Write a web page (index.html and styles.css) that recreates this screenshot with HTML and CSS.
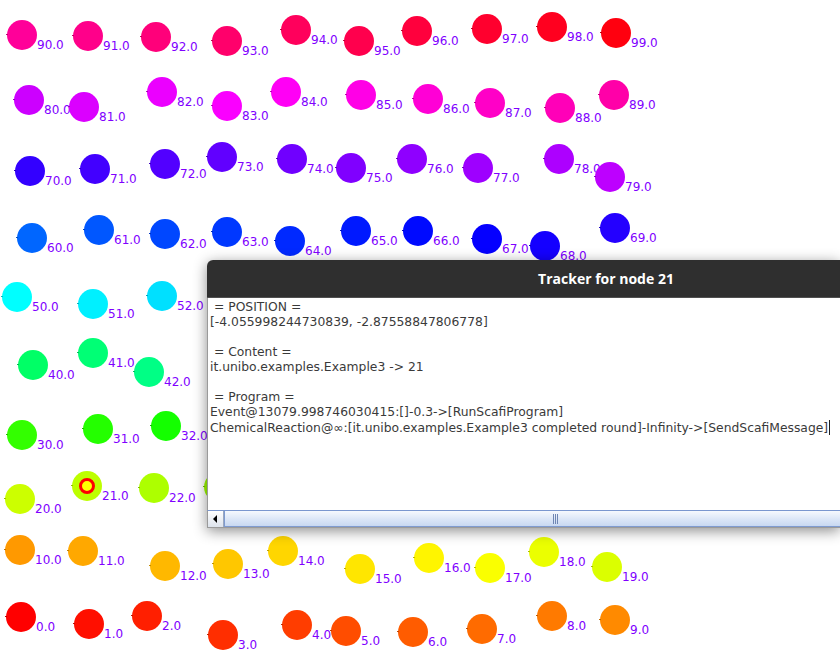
FILE: index.html
```html
<!DOCTYPE html>
<html>
<head>
<meta charset="utf-8">
<link rel="stylesheet" href="styles.css">
</head>
<body>
<div class="canvas">
  <div class="node" style="left:22px;top:35px;--v:90"><i class="dot"></i><span class="lbl">90.0</span></div>
  <div class="node" style="left:88px;top:36px;--v:91"><i class="dot"></i><span class="lbl">91.0</span></div>
  <div class="node" style="left:156px;top:37px;--v:92"><i class="dot"></i><span class="lbl">92.0</span></div>
  <div class="node" style="left:227px;top:41px;--v:93"><i class="dot"></i><span class="lbl">93.0</span></div>
  <div class="node" style="left:296px;top:30px;--v:94"><i class="dot"></i><span class="lbl">94.0</span></div>
  <div class="node" style="left:359px;top:41px;--v:95"><i class="dot"></i><span class="lbl">95.0</span></div>
  <div class="node" style="left:417px;top:31px;--v:96"><i class="dot"></i><span class="lbl">96.0</span></div>
  <div class="node" style="left:487px;top:29px;--v:97"><i class="dot"></i><span class="lbl">97.0</span></div>
  <div class="node" style="left:552px;top:27px;--v:98"><i class="dot"></i><span class="lbl">98.0</span></div>
  <div class="node" style="left:616px;top:33px;--v:99"><i class="dot"></i><span class="lbl">99.0</span></div>

  <div class="node" style="left:29px;top:100px;--v:80"><i class="dot"></i><span class="lbl">80.0</span></div>
  <div class="node" style="left:84px;top:107px;--v:81"><i class="dot"></i><span class="lbl">81.0</span></div>
  <div class="node" style="left:162px;top:92px;--v:82"><i class="dot"></i><span class="lbl">82.0</span></div>
  <div class="node" style="left:227px;top:106px;--v:83"><i class="dot"></i><span class="lbl">83.0</span></div>
  <div class="node" style="left:286px;top:92px;--v:84"><i class="dot"></i><span class="lbl">84.0</span></div>
  <div class="node" style="left:361px;top:95px;--v:85"><i class="dot"></i><span class="lbl">85.0</span></div>
  <div class="node" style="left:428px;top:99px;--v:86"><i class="dot"></i><span class="lbl">86.0</span></div>
  <div class="node" style="left:490px;top:103px;--v:87"><i class="dot"></i><span class="lbl">87.0</span></div>
  <div class="node" style="left:560px;top:108px;--v:88"><i class="dot"></i><span class="lbl">88.0</span></div>
  <div class="node" style="left:614px;top:95px;--v:89"><i class="dot"></i><span class="lbl">89.0</span></div>

  <div class="node" style="left:30px;top:171px;--v:70"><i class="dot"></i><span class="lbl">70.0</span></div>
  <div class="node" style="left:95px;top:169px;--v:71"><i class="dot"></i><span class="lbl">71.0</span></div>
  <div class="node" style="left:165px;top:164px;--v:72"><i class="dot"></i><span class="lbl">72.0</span></div>
  <div class="node" style="left:222px;top:157px;--v:73"><i class="dot"></i><span class="lbl">73.0</span></div>
  <div class="node" style="left:292px;top:159px;--v:74"><i class="dot"></i><span class="lbl">74.0</span></div>
  <div class="node" style="left:351px;top:168px;--v:75"><i class="dot"></i><span class="lbl">75.0</span></div>
  <div class="node" style="left:412px;top:159px;--v:76"><i class="dot"></i><span class="lbl">76.0</span></div>
  <div class="node" style="left:478px;top:168px;--v:77"><i class="dot"></i><span class="lbl">77.0</span></div>
  <div class="node" style="left:559px;top:159px;--v:78"><i class="dot"></i><span class="lbl">78.0</span></div>
  <div class="node" style="left:610px;top:177px;--v:79"><i class="dot"></i><span class="lbl">79.0</span></div>

  <div class="node" style="left:32px;top:238px;--v:60"><i class="dot"></i><span class="lbl">60.0</span></div>
  <div class="node" style="left:99px;top:230px;--v:61"><i class="dot"></i><span class="lbl">61.0</span></div>
  <div class="node" style="left:165px;top:234px;--v:62"><i class="dot"></i><span class="lbl">62.0</span></div>
  <div class="node" style="left:227px;top:232px;--v:63"><i class="dot"></i><span class="lbl">63.0</span></div>
  <div class="node" style="left:290px;top:241px;--v:64"><i class="dot"></i><span class="lbl">64.0</span></div>
  <div class="node" style="left:356px;top:231px;--v:65"><i class="dot"></i><span class="lbl">65.0</span></div>
  <div class="node" style="left:418px;top:231px;--v:66"><i class="dot"></i><span class="lbl">66.0</span></div>
  <div class="node" style="left:487px;top:239px;--v:67"><i class="dot"></i><span class="lbl">67.0</span></div>
  <div class="node" style="left:545px;top:246px;--v:68"><i class="dot"></i><span class="lbl">68.0</span></div>
  <div class="node" style="left:615px;top:228px;--v:69"><i class="dot"></i><span class="lbl">69.0</span></div>

  <div class="node" style="left:17px;top:297px;--v:50"><i class="dot"></i><span class="lbl">50.0</span></div>
  <div class="node" style="left:93px;top:304px;--v:51"><i class="dot"></i><span class="lbl">51.0</span></div>
  <div class="node" style="left:162px;top:296px;--v:52"><i class="dot"></i><span class="lbl">52.0</span></div>

  <div class="node" style="left:33px;top:365px;--v:40"><i class="dot"></i><span class="lbl">40.0</span></div>
  <div class="node" style="left:93px;top:353px;--v:41"><i class="dot"></i><span class="lbl">41.0</span></div>
  <div class="node" style="left:149px;top:372px;--v:42"><i class="dot"></i><span class="lbl">42.0</span></div>

  <div class="node" style="left:22px;top:435px;--v:30"><i class="dot"></i><span class="lbl">30.0</span></div>
  <div class="node" style="left:98px;top:429px;--v:31"><i class="dot"></i><span class="lbl">31.0</span></div>
  <div class="node" style="left:166px;top:426px;--v:32"><i class="dot"></i><span class="lbl">32.0</span></div>

  <div class="node" style="left:20px;top:499px;--v:20"><i class="dot"></i><span class="lbl">20.0</span></div>
  <div class="node tracked" style="left:87px;top:486px;--v:21"><i class="dot"></i><b class="mark"></b><span class="lbl">21.0</span></div>
  <div class="node" style="left:154px;top:488px;--v:22"><i class="dot"></i><span class="lbl">22.0</span></div>
  <div class="node" style="left:219px;top:487px;--v:23"><i class="dot"></i><span class="lbl">23.0</span></div>

  <div class="node" style="left:20px;top:550px;--v:10"><i class="dot"></i><span class="lbl">10.0</span></div>
  <div class="node" style="left:83px;top:551px;--v:11"><i class="dot"></i><span class="lbl">11.0</span></div>
  <div class="node" style="left:165px;top:566px;--v:12"><i class="dot"></i><span class="lbl">12.0</span></div>
  <div class="node" style="left:228px;top:564px;--v:13"><i class="dot"></i><span class="lbl">13.0</span></div>
  <div class="node" style="left:283px;top:551px;--v:14"><i class="dot"></i><span class="lbl">14.0</span></div>
  <div class="node" style="left:360px;top:569px;--v:15"><i class="dot"></i><span class="lbl">15.0</span></div>
  <div class="node" style="left:429px;top:558px;--v:16"><i class="dot"></i><span class="lbl">16.0</span></div>
  <div class="node" style="left:490px;top:568px;--v:17"><i class="dot"></i><span class="lbl">17.0</span></div>
  <div class="node" style="left:544px;top:552px;--v:18"><i class="dot"></i><span class="lbl">18.0</span></div>
  <div class="node" style="left:607px;top:567px;--v:19"><i class="dot"></i><span class="lbl">19.0</span></div>

  <div class="node" style="left:21px;top:617px;--v:0"><i class="dot"></i><span class="lbl">0.0</span></div>
  <div class="node" style="left:89px;top:624px;--v:1"><i class="dot"></i><span class="lbl">1.0</span></div>
  <div class="node" style="left:147px;top:616px;--v:2"><i class="dot"></i><span class="lbl">2.0</span></div>
  <div class="node" style="left:223px;top:635px;--v:3"><i class="dot"></i><span class="lbl">3.0</span></div>
  <div class="node" style="left:297px;top:625px;--v:4"><i class="dot"></i><span class="lbl">4.0</span></div>
  <div class="node" style="left:346px;top:631px;--v:5"><i class="dot"></i><span class="lbl">5.0</span></div>
  <div class="node" style="left:413px;top:632px;--v:6"><i class="dot"></i><span class="lbl">6.0</span></div>
  <div class="node" style="left:482px;top:629px;--v:7"><i class="dot"></i><span class="lbl">7.0</span></div>
  <div class="node" style="left:552px;top:616px;--v:8"><i class="dot"></i><span class="lbl">8.0</span></div>
  <div class="node" style="left:615px;top:620px;--v:9"><i class="dot"></i><span class="lbl">9.0</span></div>
</div>

<div class="tracker">
  <div class="titlebar">Tracker for node 21</div>
  <div class="content"><div class="line"> = POSITION =</div><div class="line">[-4.055998244730839, -2.87558847806778]</div><div class="line"> </div><div class="line"> = Content =</div><div class="line">it.unibo.examples.Example3 -&gt; 21</div><div class="line"> </div><div class="line"> = Program =</div><div class="line">Event@13079.998746030415:[]-0.3-&gt;[RunScafiProgram]</div><div class="line">ChemicalReaction@∞:[it.unibo.examples.Example3 completed round]-Infinity-&gt;[SendScafiMessage]<span class="caret"></span></div></div>
  <div class="hscroll">
    <div class="arrow-btn"><svg width="5" height="8" viewBox="0 0 5 8"><path d="M4 0 L0 4 L4 8 Z" fill="#000"/></svg></div>
    <div class="thumb"><span class="grip"></span></div>
  </div>
</div>
</body>
</html>
```
FILE: styles.css
```css
html, body {
  margin: 0;
  padding: 0;
  background: #ffffff;
  overflow: hidden;
  width: 840px;
  height: 669px;
}

.canvas {
  position: relative;
  width: 840px;
  height: 669px;
}

.node {
  position: absolute;
  width: 0;
  height: 0;
}

.dot {
  position: absolute;
  left: -15px;
  top: -15px;
  width: 30px;
  height: 30px;
  border-radius: 50%;
  background: hsl(calc(var(--v) * 3.6), 100%, 50%);
}

.dot::before {
  content: "";
  position: absolute;
  left: -1px;
  top: 14px;
  width: 2px;
  height: 1px;
  background: hsl(calc(var(--v) * 3.6), 100%, 38%);
}

.mark {
  position: absolute;
  left: -8px;
  top: -8px;
  width: 10px;
  height: 10px;
  border: 3px solid #ff0000;
  border-radius: 50%;
  background: #ffff00;
}

.lbl {
  position: absolute;
  left: 15px;
  top: 4px;
  font-family: "DejaVu Sans", sans-serif;
  font-size: 12px;
  line-height: 12px;
  color: #8000ff;
  white-space: nowrap;
}

.tracker {
  position: absolute;
  left: 207px;
  top: 260px;
  width: 633px;
  overflow: hidden;
  background: #ffffff;
  border-radius: 6px 0 0 0;
  box-shadow: 0 3px 14px rgba(0, 0, 0, 0.45);
  display: flex;
  flex-direction: column;
}

.titlebar {
  height: 37px;
  padding-left: 165px;
  background: #2f2f2f;
  border-bottom: 1px solid #505050;
  color: #ffffff;
  font-family: "Open Sans", "DejaVu Sans", sans-serif;
  font-weight: 700;
  font-size: 14px;
  display: flex;
  align-items: center;
  justify-content: center;
}

.content {
  height: 210px;
  padding: 2px 0 0 2px;
  border-left: 1px solid #9a9a9a;
  font-family: "DejaVu Sans", sans-serif;
  font-size: 12.35px;
  line-height: 15px;
  color: #3a3a3a;
}

.line {
  white-space: pre;
  height: 15px;
}

.caret {
  display: inline-block;
  width: 1px;
  height: 15px;
  margin-left: 1px;
  background: #222;
  vertical-align: -3px;
}

.hscroll {
  height: 16px;
  border-top: 1px solid #7a97cf;
  border-left: 1px solid #9a9a9a;
  border-bottom: 1px solid #9a9a9a;
  background: #eef2f9;
  display: flex;
}

.arrow-btn {
  flex: none;
  width: 15px;
  display: flex;
  align-items: center;
  justify-content: center;
  background: linear-gradient(#ffffff, #dde3ec);
  border-right: 1px solid #9aa8c0;
}

.thumb {
  flex: none;
  width: 662px;
  background: linear-gradient(#f6f9fe, #dbe6f7 55%, #c8d8f1);
  border: 1px solid #7f9bd0;
  border-top: none;
  box-sizing: border-box;
  display: flex;
  align-items: center;
  justify-content: center;
}

.grip {
  width: 5px;
  height: 10px;
  background: repeating-linear-gradient(90deg, #6f86b3 0 1px, transparent 1px 2px);
}
```
